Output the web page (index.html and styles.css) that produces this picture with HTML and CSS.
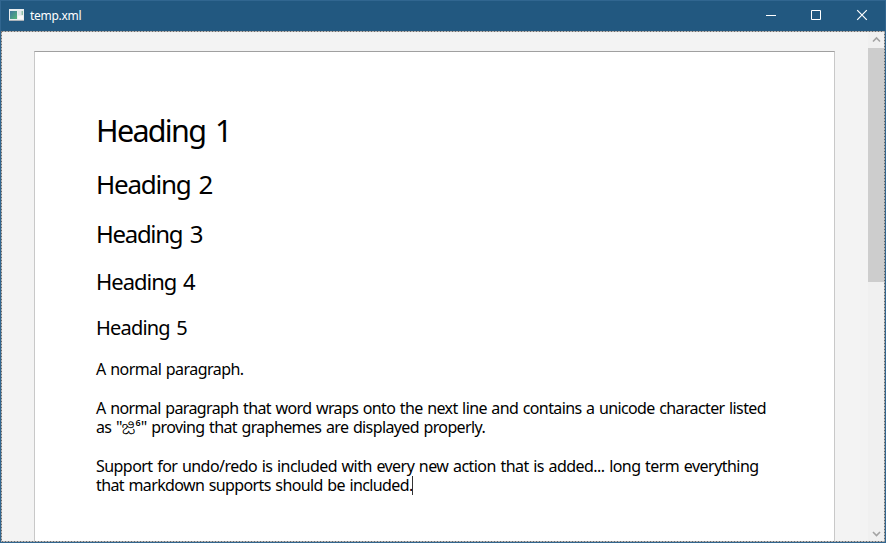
FILE: index.html
```html
<!DOCTYPE html>
<html lang="en">
<head>
<meta charset="utf-8">
<title>temp.xml</title>
<link rel="stylesheet" href="styles.css">
</head>
<body>
<div class="window">
  <header class="titlebar">
    <svg class="app-icon" width="15" height="12" viewBox="0 0 15 12">
      <defs><linearGradient id="g" x1="0" y1="0" x2="1" y2="1"><stop offset="0" stop-color="#3f78a0"/><stop offset="1" stop-color="#55b578"/></linearGradient></defs>
      <rect width="15" height="12" fill="#e9edf0"/>
      <rect x="1" y="2" width="7" height="8" fill="url(#g)"/>
      <rect x="9" y="2" width="3" height="4" fill="#dde8ea"/><rect x="12.500" y="2" width="1.500" height="4" fill="#8fc0a8"/>
      <rect x="9" y="7" width="5" height="3" fill="#f8f8f8"/>
      <path d="M0 11.500h15" stroke="#aab2b8"/>
    </svg>
    <span class="title">temp.xml</span>
    <svg class="controls" width="138" height="30" viewBox="0 0 138 30" fill="none" stroke="#fff">
      <path d="M19 14.500h10M64.500 9.500h9v9h-9z"/>
      <path d="M110.200 9.200l9.600 9.600M119.800 9.200l-9.600 9.600" stroke-width="1.200"/>
    </svg>
  </header>
  <main class="view">
    <article class="page">
      <h1>Heading 1</h1>
      <h2>Heading 2</h2>
      <h3>Heading 3</h3>
      <h4>Heading 4</h4>
      <h5>Heading 5</h5>
      <p class="short">A normal paragraph.</p>
      <p>A normal paragraph that word wraps onto the next line and contains a unicode character listed<br>as "<span class="grapheme">ಜಿ<span class="mark">6</span></span>" proving that graphemes are displayed properly.</p>
      <p><span class="wide">Support for undo/redo is included with every new action that is added... long term everything</span><br>that markdown supports should be included.<span class="caret"></span></p>
    </article>
    <aside class="scrollbar">
      <svg width="16" height="17" viewBox="0 0 16 17" fill="none" stroke="#a3a3a3" stroke-width="1.600"><path d="M5 10.500L8.500 7l3.500 3.500"/></svg>
      <div class="thumb"></div>
      <svg class="down" width="16" height="16" viewBox="0 0 16 16" fill="none" stroke="#a3a3a3" stroke-width="1.600"><path d="M5 6l3.500 3.500L12 6"/></svg>
    </aside>
    <svg class="focus" width="884" height="511" viewBox="0 0 884 511" fill="none"><rect x=".5" y=".5" width="883" height="510" stroke="#fff"/><rect x=".5" y=".5" width="883" height="510" stroke="#6b6b6b" stroke-dasharray="2 1"/></svg>
  </main>
</div>
</body>
</html>
```
FILE: styles.css
```css
* { box-sizing: border-box; }
body { margin: 0; overflow: hidden; }
.window {
  width: 886px; height: 543px; display: flex; flex-direction: column;
  border: 1px solid #316690; background: #f3f3f3;
  font-family: "Noto Sans", "Noto Sans Kannada", sans-serif;
}
.titlebar { height: 30px; flex: none; display: flex; align-items: flex-start; background: #225880; color: #fff; padding-left: 8px; }
.app-icon { margin-top: 8px; }
.title { margin: 7px 0 0 6px; font-size: 12px; line-height: 16px; letter-spacing: -0.3px; }
.controls { margin-left: auto; }
.view { position: relative; flex: 1; min-height: 0; display: flex; justify-content: space-between; overflow: hidden; }
.page {
  width: 801px; height: 600px; margin: 20px 0 0 33px; padding: 60px 0 0 61px;
  background: #fff; border: 1px solid #c8c8c8; border-top-color: #a0a0a0; color: #000;
}
h1, h2, h3, h4, h5, p { margin: 0; font-weight: 400; white-space: nowrap; }
h1 { font-size: 30.5px; line-height: 37px; letter-spacing: -1.7px; word-spacing: 3.5px; }
h2 { font-size: 26px; line-height: 32px; margin-top: 19px; letter-spacing: -1.25px; word-spacing: 2.5px; }
h3 { font-size: 24px; line-height: 30px; margin-top: 19px; letter-spacing: -1.3px; word-spacing: 2.5px; }
h4 { font-size: 22px; line-height: 27px; margin-top: 19px; letter-spacing: -1px; word-spacing: 2px; }
h5 { font-size: 20px; line-height: 24px; margin-top: 21px; letter-spacing: -0.8px; word-spacing: 2px; }
p { font-size: 16px; line-height: 19px; margin-top: 20px; letter-spacing: -0.62px; word-spacing: 1px; }
.short, .wide { letter-spacing: -0.55px; }
.grapheme { display: inline-block; width: 19px; height: 19px; font-size: 18px; font-weight: 300; letter-spacing: 0; vertical-align: top; }
.mark { font-size: 9px; line-height: 9px; font-weight: 600; vertical-align: 8px; }
.caret { display: inline-block; width: 1px; height: 19px; margin-left: -1px; background: #333; vertical-align: top; }
.scrollbar { width: 17px; padding-right: 1px; background: #f0f0f0; display: flex; flex-direction: column; }
.scrollbar svg { flex: none; }
.thumb { height: 234px; background: #cdcdcd; }
.down { margin-top: auto; }
.focus { position: absolute; left: 0; top: 0; }
```
